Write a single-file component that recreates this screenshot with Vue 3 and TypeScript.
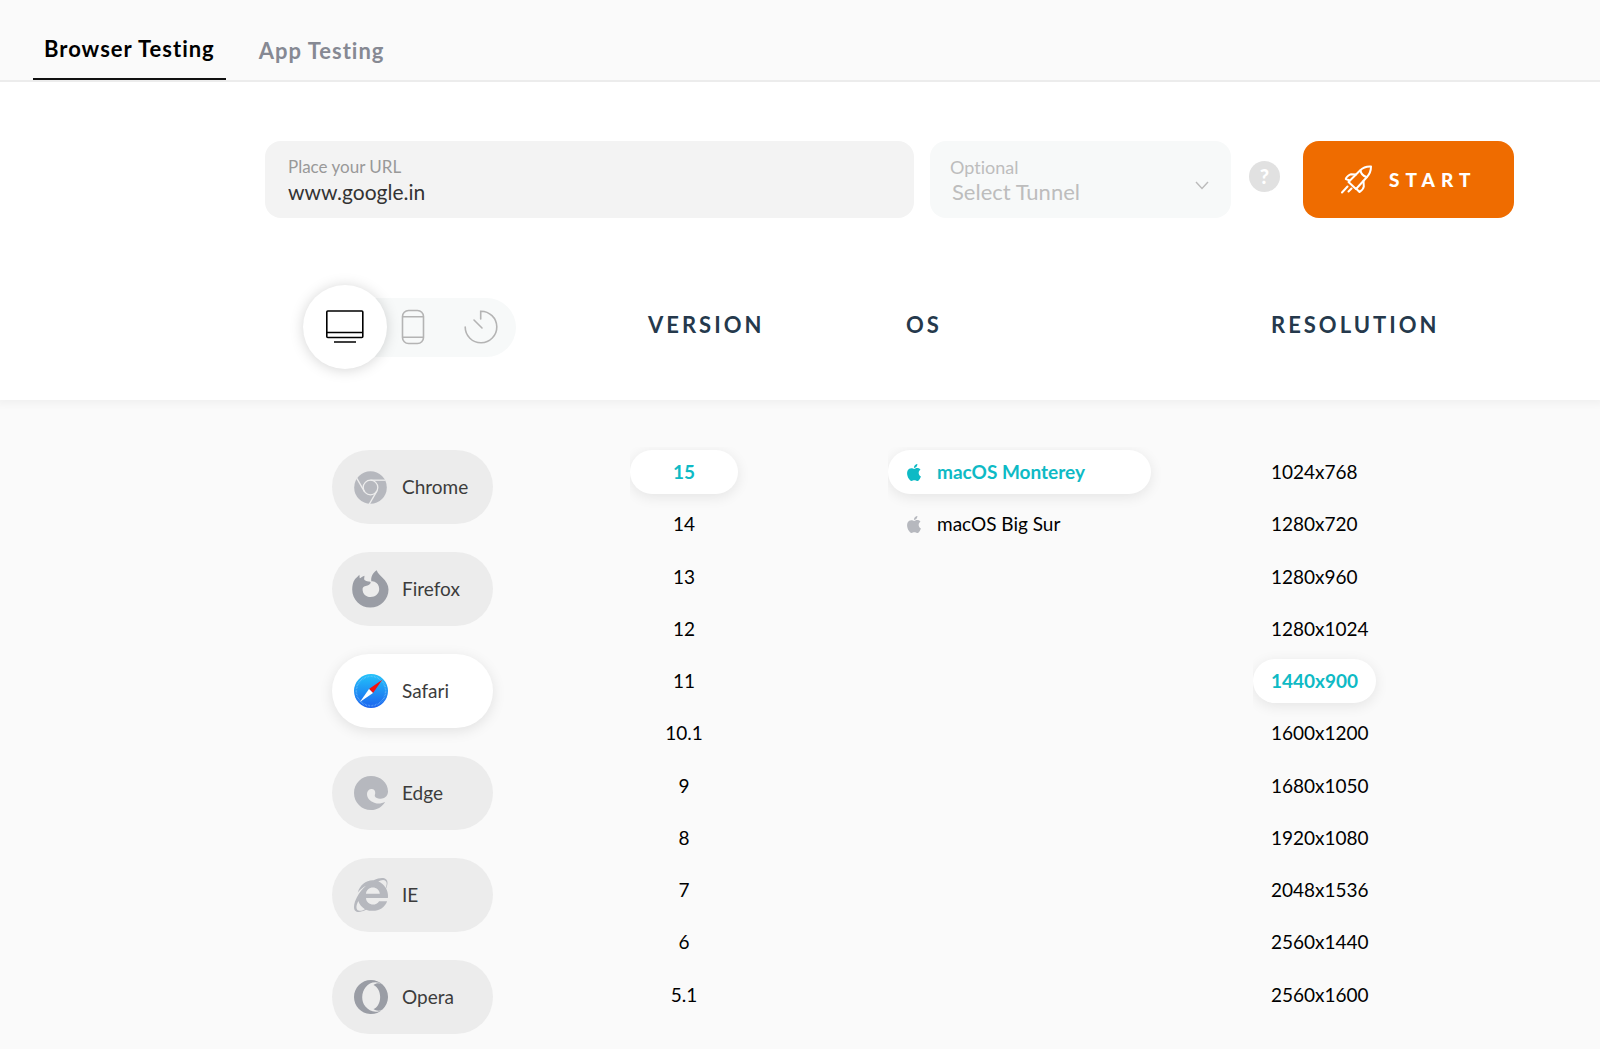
<script setup lang="ts">
import { ref } from 'vue'

type Browser = 'Chrome' | 'Firefox' | 'Safari' | 'Edge' | 'IE' | 'Opera'

const url = ref('www.google.in')
const tunnel = ref('')
const browsers: Browser[] = ['Chrome', 'Firefox', 'Safari', 'Edge', 'IE', 'Opera']
const versions = ['15', '14', '13', '12', '11', '10.1', '9', '8', '7', '6', '5.1']
const systems = ['macOS Monterey', 'macOS Big Sur']
const resolutions = [
  '1024x768', '1280x720', '1280x960', '1280x1024', '1440x900', '1600x1200',
  '1680x1050', '1920x1080', '2048x1536', '2560x1440', '2560x1600',
]

const browser = ref<Browser>('Safari')
const version = ref('15')
const system = ref('macOS Monterey')
const resolution = ref('1440x900')
</script>

<template>
  <div class="page">
    <nav class="tabs">
      <a class="tab active" href="#browser">Browser Testing</a>
      <a class="tab" href="#app">App Testing</a>
    </nav>

    <header class="setup">
      <form class="launch" @submit.prevent>
        <div class="field url">
          <label for="url">Place your URL</label>
          <input id="url" v-model="url" type="text" />
        </div>
        <div class="field tunnel">
          <label for="tunnel">Optional</label>
          <select id="tunnel" v-model="tunnel">
            <option value="">Select Tunnel</option>
          </select>
          <svg class="chevron" width="14" height="9" viewBox="0 0 14 9" aria-hidden="true">
            <path d="M1 1l6 6.5L13 1" fill="none" stroke="#bbb" stroke-width="1.4" />
          </svg>
        </div>
        <button class="help" type="button" aria-label="Help">?</button>
        <button class="start" type="submit">
          <svg width="32" height="29" viewBox="0 0 32 29" fill="none" stroke="#fff" stroke-width="2" stroke-linecap="round" stroke-linejoin="round" aria-hidden="true">
            <path d="M30 1.500C25.500 1.200 22 2.500 19 5.500L7.500 17l7.500 7 11-12c3-3.300 4-6.500 4-10.500z" />
            <path d="M19.500 5.500c.5 3.200 2.500 5.500 6 6.500" />
            <path d="M15 9.500l-5-.3c-2 .3-5 3.300-5.200 4.800l4 1.500M22.500 16l.3 5.500c-.3 2-2.600 4.700-4.300 5.500L15 23.500" />
            <path d="M1 27.500l5.500-6M7.500 26.500l3-3" />
          </svg>
          <span>START</span>
        </button>
      </form>

      <div class="columns heads">
        <div class="devices">
          <button class="device on" type="button" aria-label="Desktop">
            <svg width="38" height="34" viewBox="0 0 38 34" fill="none" stroke="#000" stroke-width="1.600" aria-hidden="true">
              <rect x=".8" y="1" width="36" height="26.500" rx="1" />
              <path d="M.8 22.500h36M8 32h22" />
            </svg>
          </button>
          <button class="device" type="button" aria-label="Mobile">
            <svg width="24" height="36" viewBox="0 0 24 36" fill="none" stroke="#b4b4b4" stroke-width="1.600" aria-hidden="true">
              <rect x="1.500" y="1.500" width="21" height="33" rx="6" />
              <path d="M1.500 7.800h21M1.500 28.200h21" />
            </svg>
          </button>
          <button class="device last" type="button" aria-label="Real time">
            <svg width="34" height="34" viewBox="0 0 34 34" fill="none" stroke="#b4b4b4" stroke-width="1.600" stroke-linecap="round" aria-hidden="true">
              <path d="M16.700 9V1.200A15.800 15.800 0 1 1 1.200 17M10 10l8 8" />
            </svg>
          </button>
        </div>
        <h2>VERSION</h2>
        <h2>OS</h2>
        <h2>RESOLUTION</h2>
      </div>
    </header>

    <main class="columns choices">
      <ul class="browsers">
        <li v-for="b in browsers" :key="b">
          <button class="browser" :class="{ on: b === browser }" type="button" @click="browser = b">
            <span class="logo">
              <svg v-if="b === 'Chrome'" width="33" height="33" viewBox="0 0 33 33">
                <circle cx="16.500" cy="16.500" r="16.300" fill="#b6b8be" />
                <g fill="none" stroke="#ededed" stroke-width="1.300">
                  <circle cx="16.500" cy="16.500" r="7.300" />
                  <path d="M16.500 9.200H31.500" />
                  <path d="M16.500 9.200H31.500" transform="rotate(120 16.500 16.500)" />
                  <path d="M16.500 9.200H31.500" transform="rotate(240 16.500 16.500)" />
                </g>
              </svg>
              <svg v-else-if="b === 'Firefox'" width="37" height="38" viewBox="0 0 37 38">
                <path fill="#9a9da5" d="M24.700.3c.8 2.900 3.300 4.800 5.600 7.200 3.900 3.900 6.200 7.400 6.200 11.900 0 10-8 18.100-18.200 18.100S.2 29.400.2 19.400C.2 15.800 1 12 2.800 9.500c.9-1.200 1.300-1.500 2.200-2.300l2.400-2.400.3 3.500c1.200-.3 2-1.500 4.800-2.600l-.4 3.500c.8 1.400 2.300 2 4.400 2.300 1 .1 2.300.2 2.200 1.100-.2 1.500-1.500 2.400-3.200 2.900-2.400.8-4.800.8-4.900 3.900C10.500 23.600 14 27 18.600 27c4.800 0 8.600-3.400 8.600-8 0-3.200-1.700-6-4.600-7.200-.9-.4-2.200-.6-3.200-.4C18.500 7.300 20.700 3 24.700.3z" />
              </svg>
              <svg v-else-if="b === 'Safari'" width="34" height="34" viewBox="0 0 34 34">
                <defs>
                  <linearGradient id="sky" x1="0" y1="0" x2="0" y2="1">
                    <stop offset="0" stop-color="#22c3fa" />
                    <stop offset="1" stop-color="#1b62ee" />
                  </linearGradient>
                </defs>
                <circle cx="17" cy="17" r="17" fill="url(#sky)" />
                <circle cx="17" cy="17" r="14.700" fill="none" stroke="#9ad4ff" stroke-opacity=".6" stroke-width="1.600" stroke-dasharray=".6 .9" />
                <path d="M28.300 5.700L15 15l4 4z" fill="#f5100d" />
                <path d="M5.900 28.100L15 15l4 4z" fill="#fff" />
              </svg>
              <svg v-else-if="b === 'Edge'" width="34" height="34" viewBox="0 0 34 34">
                <path fill="#b6b8be" d="M34 15.500C34 6.500 26.500 0 17 0S0 7.500 0 17s7.500 17 17 17c6 0 11-2.800 14.200-8.300-3 1.800-7 2.300-10.200 1.300-5-1.500-8-5-8-9 0-3 2-5 4.600-5 2.400 0 4 2 3.600 4.500-.3 1.700-.7 2.200-.2 3.100 1 1.900 4 2.400 7 1.900 3.600-.7 6-3.200 6-7z" />
              </svg>
              <svg v-else-if="b === 'IE'" width="34" height="34" viewBox="0 0 512 512">
                <path fill="#b6b8be" d="M483.049 159.706c10.855-24.575 21.424-60.438 21.424-87.871 0-72.722-79.641-98.371-209.673-38.577-107.632-7.181-211.221 73.670-237.098 186.457 30.852-34.862 78.271-82.298 121.977-101.158C125.404 166.850 79.128 228.002 43.992 291.725 23.246 329.651 0 390.940 0 436.747c0 98.575 92.854 86.500 180.251 42.006 31.423 15.430 66.559 15.573 101.695 15.573 97.124 0 184.249-54.294 216.814-146.022H377.927c-52.509 88.593-196.819 52.996-196.819-47.436H509.900c6.407-43.581-1.655-95.715-26.851-141.162zM64.559 346.877c17.711 51.150 53.703 95.871 100.266 123.304-88.741 48.940-173.267 29.096-100.266-123.304zm115.977-108.873c2-55.151 50.276-94.871 103.980-94.871 53.418 0 101.981 39.720 103.981 94.871H180.536zm184.536-187.600c21.425-10.287 48.559-22.003 72.558-22.003 31.422 0 54.274 21.717 54.274 53.722 0 20.003-7.427 49.007-14.569 67.867-26.280-42.292-65.986-81.584-112.263-99.586z" />
              </svg>
              <svg v-else width="34" height="34" viewBox="0 0 496 496">
                <path fill="#9a9da5" d="M313.900 32.700c-170.200 0-252.600 223.800-147.500 355.100 36.500 45.400 88.600 75.600 147.500 75.600 36.300 0 70.300-11.100 99.400-30.400-43.800 39.200-101.900 63-165.300 63-3.900 0-8 0-11.900-.3C104.600 489.600 0 381.100 0 248 0 111 111 0 248 0h.8c63.100.3 120.700 24.100 164.400 63.100-29-19.400-63.100-30.400-99.300-30.400zm101.800 397.700c-40.900 24.700-90.700 23.600-132-5.800 56.200-20.500 97.700-91.600 97.700-176.600 0-84.700-41.200-155.800-97.400-176.600 41.800-29.200 91.200-30.300 132.900-5 105.900 98.700 105.500 265.700-1.200 364z" />
              </svg>
            </span>
            {{ b }}
          </button>
        </li>
      </ul>

      <ul class="options versions">
        <li v-for="v in versions" :key="v">
          <button class="option" :class="{ on: v === version }" type="button" @click="version = v">{{ v }}</button>
        </li>
      </ul>

      <ul class="options systems">
        <li v-for="s in systems" :key="s">
          <button class="option" :class="{ on: s === system }" type="button" @click="system = s">
            <svg class="apple" width="18" height="17" viewBox="0 0 24 24" aria-hidden="true">
              <path d="M12.152 6.896c-.948 0-2.415-1.078-3.960-1.040-2.040.027-3.910 1.183-4.961 3.014-2.117 3.675-.546 9.103 1.519 12.090 1.013 1.454 2.208 3.090 3.792 3.039 1.520-.065 2.090-.987 3.935-.987 1.831 0 2.350.987 3.960.948 1.637-.026 2.676-1.480 3.676-2.948 1.156-1.688 1.636-3.325 1.662-3.415-.039-.013-3.182-1.221-3.220-4.857-.026-3.040 2.480-4.494 2.597-4.559-1.429-2.090-3.623-2.324-4.390-2.376-2-.156-3.675 1.090-4.610 1.090zM15.530 3.830c.843-1.012 1.400-2.427 1.245-3.830-1.207.052-2.662.805-3.532 1.818-.780.896-1.454 2.338-1.273 3.714 1.338.104 2.715-.688 3.559-1.701" />
            </svg>
            {{ s }}
          </button>
        </li>
      </ul>

      <ul class="options resolutions">
        <li v-for="r in resolutions" :key="r">
          <button class="option" :class="{ on: r === resolution }" type="button" @click="resolution = r">{{ r }}</button>
        </li>
      </ul>
    </main>
  </div>
</template>

<style>
body {
  background: #fafafa;
}
</style>

<style scoped>
* {
  box-sizing: border-box;
}
.page,
button,
input,
select {
  font-family: Lato, sans-serif;
  font-variant-ligatures: none;
}
button {
  border: 0;
  padding: 0;
  background: none;
  cursor: pointer;
}
svg {
  display: block;
}
ul {
  list-style: none;
  margin: 0;
  padding: 0;
}

.tabs {
  display: flex;
  align-items: flex-end;
  height: 82px;
  padding: 0 33px;
  gap: 22px;
  border-bottom: 2px solid #ececec;
}
.tab {
  padding: 0 11px 15px;
  font-size: 22px;
  line-height: 28px;
  font-weight: 700;
  letter-spacing: 1px;
  color: #868993;
  text-decoration: none;
}
.tab.active {
  color: #000;
  border-bottom: 2px solid #111;
}

.setup {
  background: #fff;
  padding: 59px 86px 31px 265px;
  box-shadow: 0 0 8px 4px rgba(0, 0, 0, 0.04);
  clip-path: inset(0 0 -16px 0);
}
.launch {
  display: flex;
  align-items: center;
}
.field {
  position: relative;
  display: flex;
  flex-direction: column;
  height: 77px;
  padding: 14px 23px 0;
  border-radius: 16px;
}
.field label {
  font-size: 18px;
  line-height: 24px;
  color: #999;
}
.field input,
.field select {
  appearance: none;
  width: 100%;
  height: 26px;
  margin: 0;
  padding: 0;
  border: 0;
  outline: 0;
  background: none;
  font-size: 22px;
  line-height: 26px;
}
.url {
  flex: 1;
  background: #f3f3f3;
}
.field.url label {
  font-size: 17px;
}
.field.url input {
  font-size: 21px;
  color: #333;
}
.field.tunnel {
  width: 301px;
  margin-left: 16px;
  padding: 14px 20px 0;
  background: #f7f9f9;
}
.field.tunnel label,
.field.tunnel select {
  color: #bdbdbd;
}
.field.tunnel select {
  padding-left: 2px;
  opacity: 1;
}
.chevron {
  position: absolute;
  right: 22px;
  top: 40px;
  pointer-events: none;
}
.help {
  width: 31px;
  height: 31px;
  margin: 0 23px 6px 18px;
  border-radius: 50%;
  background: #e1e1e1;
  color: #fff;
  font-size: 20px;
  line-height: 31px;
  font-weight: 900;
}
.start {
  display: flex;
  align-items: center;
  width: 211px;
  height: 77px;
  padding-left: 38px;
  gap: 16px;
  border-radius: 16px;
  background: #ef6c00;
  color: #fff;
  font-size: 19px;
  line-height: 24px;
  font-weight: 900;
  letter-spacing: 6px;
}

.columns {
  display: grid;
  grid-template-columns: 365fr 258fr 365fr 261fr;
}
.heads {
  margin-top: 67px;
  height: 84px;
}
.heads h2 {
  margin: 0;
  padding: 26px 0 0 18px;
  font-size: 22px;
  line-height: 28px;
  font-weight: 700;
  letter-spacing: 3px;
  color: #25394c;
}
.devices {
  display: flex;
  align-items: center;
  align-self: center;
  justify-self: start;
  height: 59px;
  margin-left: 38px;
  padding-right: 9px;
  border-radius: 30px;
  background: #f7f9f9;
}
.device {
  display: flex;
  align-items: center;
  justify-content: center;
  width: 52px;
  height: 52px;
}
.device.on {
  width: 84px;
  height: 84px;
  border-radius: 50%;
  background: #fff;
  box-shadow: 0 1px 14px rgba(0, 0, 0, 0.17);
}
.device.last {
  margin-left: 16px;
}

.choices {
  padding: 47px 86px 15px 265px;
}
.browsers {
  display: flex;
  flex-direction: column;
  gap: 28px;
  padding: 3px 0 0 67px;
}
.browser {
  display: flex;
  align-items: center;
  width: 161px;
  height: 74px;
  padding-left: 20px;
  gap: 13px;
  border-radius: 37px;
  background: #ececec;
  color: #3c3c3c;
  font-size: 19px;
  line-height: 24px;
}
.browser.on {
  background: #fff;
  box-shadow: 0 3px 14px rgba(0, 0, 0, 0.1);
}
.logo {
  display: flex;
  justify-content: center;
  width: 37px;
}

.options {
  display: grid;
  grid-template-rows: repeat(11, 1fr);
  padding: 3px 0 9px;
  overflow: hidden;
}
.option {
  display: flex;
  align-items: center;
  height: 44px;
  padding: 0 18px;
  border-radius: 22px;
  color: #000;
  font-size: 19px;
  line-height: 24px;
}
.option.on {
  background: #fff;
  color: #0ebac5;
  font-weight: 700;
  box-shadow: 0 3px 14px rgba(0, 0, 0, 0.09);
}
.versions .option {
  justify-content: center;
  width: 108px;
}
.systems .option {
  width: 263px;
  padding: 0 17px;
  gap: 14px;
}
.apple {
  fill: #b6b8be;
}
.on .apple {
  fill: #0ebac5;
}
</style>
